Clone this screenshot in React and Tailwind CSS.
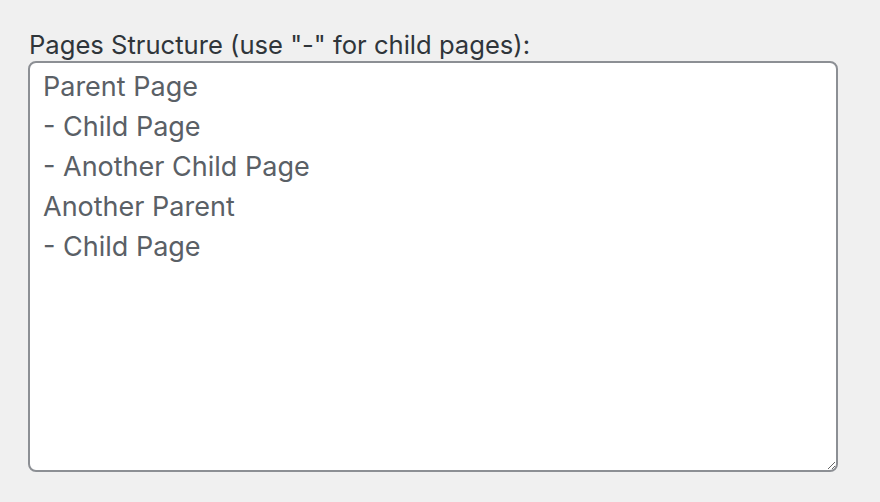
import React from 'react';

const pages = `Parent Page
- Child Page
- Another Child Page
Another Parent
- Child Page`;

const App = () => {
  return (
    <div className="min-h-[502px] w-[880px] bg-[#f0f0f0] pl-[28px] pt-[28px] font-['Inter',sans-serif]">
      <label
        htmlFor="pages-structure"
        className="block pl-[1px] text-[25.6px] leading-[33px] text-[#2f353a]"
      >
        Pages Structure (use "-" for child pages):
      </label>
      <textarea
        id="pages-structure"
        defaultValue={pages}
        className="block h-[411px] w-[810px] rounded-[8px] border-2 border-[#8c8f94] bg-white px-[13px] py-[4px] font-['Inter',sans-serif] text-[27px] leading-[40px] text-[#5a6066] outline-none"
      />
    </div>
  );
};

export default App;
